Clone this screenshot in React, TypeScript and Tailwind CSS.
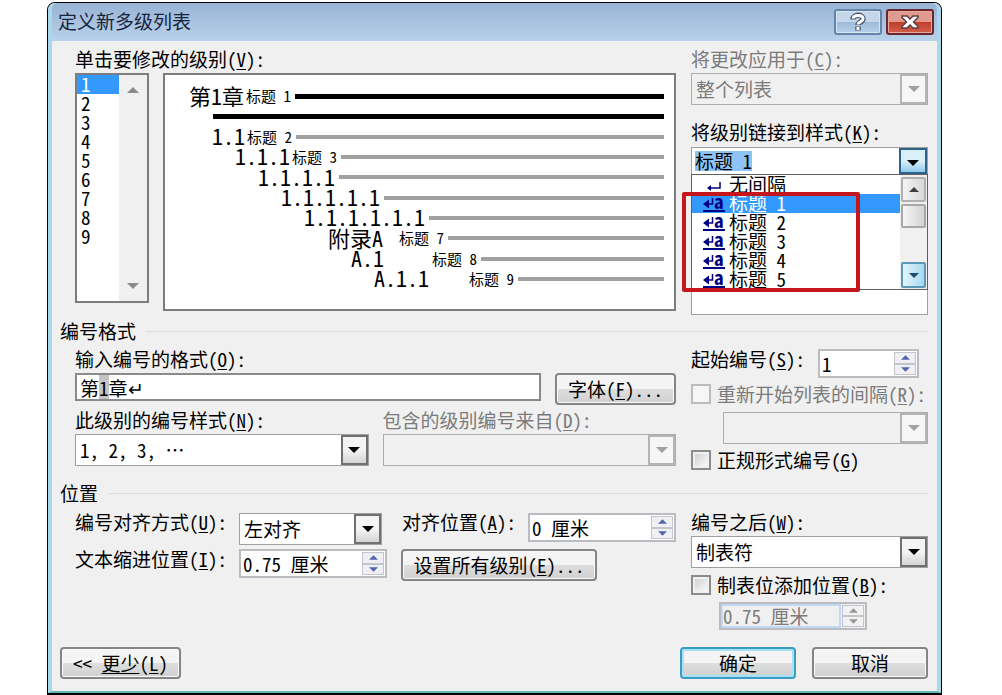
import { useId, type ReactNode } from "react";
import clsx from "clsx";

const previewRows = [
  { no: "第1章", title: "标题 1", indent: "ml-6", tab: "ml-[2px]", dark: true },
  { no: "", title: "", indent: "ml-12", tab: "", dark: true },
  { no: "1.1", title: "标题 2", indent: "ml-[47px]", tab: "ml-[2px]" },
  { no: "1.1.1", title: "标题 3", indent: "ml-[70px]", tab: "ml-[2px]" },
  { no: "1.1.1.1", title: "", indent: "ml-[93px]", tab: "" },
  { no: "1.1.1.1.1", title: "", indent: "ml-[116px]", tab: "" },
  { no: "1.1.1.1.1.1", title: "", indent: "ml-[139px]", tab: "" },
  { no: "附录A", title: "标题 7", indent: "ml-[163px]", tab: "ml-4" },
  { no: "A.1", title: "标题 8", indent: "ml-[186px]", tab: "ml-12" },
  { no: "A.1.1", title: "标题 9", indent: "ml-[209px]", tab: "ml-10" },
];

const levels = ["1", "2", "3", "4", "5", "6", "7", "8", "9"];
const styles = ["无间隔", "标题 1", "标题 2", "标题 3", "标题 4", "标题 5"];

function Text({ label, hot, end = ":" }: { label: string; hot: string; end?: string }) {
  return (
    <>
      {label}(<u className="underline-offset-2">{hot}</u>){end}
    </>
  );
}

function Arrow({ up = false, className }: { up?: boolean; className?: string }) {
  return (
    <svg viewBox="0 0 12 6" className={clsx("fill-current", className)} aria-hidden="true">
      <path d={up ? "M0 6 6 0l6 6z" : "M0 0h12L6 6z"} />
    </svg>
  );
}

function DropDown({ id, value, disabled = false }: { id: string; value: string; disabled?: boolean }) {
  return (
    <div className="relative h-8 w-full">
      <select
        id={id}
        disabled={disabled}
        className={clsx(
          "h-full w-full appearance-none border px-1 outline-none",
          disabled ? "border-[#adadad] bg-[#f0f0f0] text-[#7b7b7b] opacity-100" : "border-[#a0a0a0] bg-white text-black"
        )}
      >
        <option>{value}</option>
      </select>
      <span
        className={clsx(
          "pointer-events-none absolute inset-y-px right-px flex w-[27px] items-center justify-center border-2",
          disabled
            ? "border-[#b4b4b4] bg-[#f6f6f6] text-[#a0a0a0]"
            : "border-[#707070] bg-linear-to-b from-[#f4f4f4] from-50% to-[#d4d4d4] text-black"
        )}
      >
        <Arrow className="h-[6px] w-3" />
      </span>
    </div>
  );
}

function Spinner({ id, value, disabled = false }: { id: string; value: string; disabled?: boolean }) {
  const step = clsx(
    "flex flex-1 items-center justify-center border border-[#c4c4cc]",
    disabled ? "bg-[#f2f2f2] text-[#9a9a9a]" : "bg-[#f0f0f4] text-[#5266a8]"
  );
  return (
    <div
      className={clsx(
        "flex w-full border-2 border-[#b9bcc0]",
        disabled ? "h-7 bg-[#f0f0f0] text-[#7b7b7b]" : "h-[29px] bg-white text-black"
      )}
    >
      <input
        id={id}
        defaultValue={value}
        disabled={disabled}
        className={clsx("min-w-0 flex-1 outline-none", disabled ? "border-2 border-[#c3d9f3]" : "px-[2px]")}
      />
      <div className="flex w-6 flex-col p-px">
        <button type="button" aria-label="增加" disabled={disabled} className={step}>
          <Arrow up className="h-[5px] w-[9px]" />
        </button>
        <button type="button" aria-label="减少" disabled={disabled} className={step}>
          <Arrow className="h-[5px] w-[9px]" />
        </button>
      </div>
    </div>
  );
}

function PushButton({ children, className, primary = false }: { children: ReactNode; className?: string; primary?: boolean }) {
  return (
    <button
      type="button"
      className={clsx(
        "h-8 rounded-[4px] border-2 bg-linear-to-b from-[#f4f4f4] from-50% via-[#dedede] via-50% to-[#d0d0d0] leading-7",
        primary ? "border-[#3c9cc4] shadow-[inset_0_0_0_2px_#a6e2f6]" : "border-[#858585] shadow-[inset_0_0_0_1px_#fafafa]",
        className
      )}
    >
      {children}
    </button>
  );
}

function CheckBox({ children, disabled = false }: { children: ReactNode; disabled?: boolean }) {
  const id = useId();
  return (
    <div className="flex h-6 items-center gap-[6px]">
      <input
        id={id}
        type="checkbox"
        disabled={disabled}
        className={clsx(
          "size-5 shrink-0 appearance-none border-2",
          disabled
            ? "border-[#bcbcbc] bg-[#f6f6f6]"
            : "border-[#8c8c8c] bg-linear-to-br from-[#c8ccd0] to-white shadow-[inset_0_0_0_2px_#f0f0f0]"
        )}
      />
      <label htmlFor={id} className={clsx("whitespace-nowrap", disabled && "text-[#7b7b7b]")}>
        {children}
      </label>
    </div>
  );
}

function SectionTitle({ children }: { children: ReactNode }) {
  return (
    <div className="flex h-6 items-center gap-[10px]">
      <h2>{children}</h2>
      <div className="h-px flex-1 bg-[#d5dfe5]" />
    </div>
  );
}

function StyleIcon({ paragraph }: { paragraph: boolean }) {
  if (paragraph) {
    return (
      <svg viewBox="0 0 22 18" className="h-[18px] w-[22px] shrink-0" fill="none" stroke="#000080" aria-hidden="true">
        <path d="M17 6v6H6" strokeWidth="1.5" />
        <path d="M8 9v6l-4-3z" fill="#000080" stroke="none" />
      </svg>
    );
  }
  return (
    <span className="flex h-[17px] w-[22px] shrink-0 items-center border-b-2 border-[#000080] text-[#000080]">
      <svg viewBox="0 0 11 14" className="h-[14px] w-[11px]" fill="none" stroke="currentColor" aria-hidden="true">
        <path d="M9.500 2v6H4" strokeWidth="1.5" />
        <path d="M6 3.500v9L0 8z" fill="currentColor" stroke="none" />
      </svg>
      <b className="pb-[3px] font-['Noto_Sans_Mono_CJK_SC','Liberation_Mono',monospace] leading-4">a</b>
    </span>
  );
}

function TitleBar() {
  return (
    <header className="flex h-[38px] justify-between rounded-t-[5px] bg-linear-to-b from-[#98b4d4] to-[#b9d1ea] pr-[3px] pl-[6px]">
      <h1 className="leading-9 text-[#17233c]">定义新多级列表</h1>
      <div className="flex gap-1 pt-[6px]">
        <button
          type="button"
          aria-label="帮助"
          className="flex h-[26px] w-[48px] items-center justify-center rounded-[3px] border-2 border-[#6484a8] bg-linear-to-b from-[#c3d6ea] from-50% via-[#9dbbd9] via-50% to-[#b6d0e9] shadow-[inset_0_0_0_1px_#d7e5f3]"
        >
          <svg viewBox="0 0 16 20" className="h-5 w-4" fill="none" aria-hidden="true">
            <path d="M3 7.500C3 2 13 2 13 7c0 3-5 3-5 6M8 14.500v4" stroke="#4c566a" strokeWidth="5.500" />
            <path d="M3 6.500C4 2.500 13 2.500 13 7c0 3-5 3-5 5.500M8 15v3" stroke="#fff" strokeWidth="3" />
          </svg>
        </button>
        <button
          type="button"
          aria-label="关闭"
          className="flex h-[26px] w-[48px] items-center justify-center rounded-[3px] border-2 border-[#6b2630] bg-linear-to-b from-[#e09a90] from-50% via-[#c03c28] via-50% to-[#d0604a] shadow-[inset_0_0_0_1px_#eba99e]"
        >
          <svg viewBox="0 0 18 16" className="h-4 w-[18px]" aria-hidden="true">
            <path
              d="M1 2h5l3 3 3-3h5v1.500L12.500 8l4.500 4.500V14h-5l-3-3-3 3H1v-1.500L5.500 8 1 3.500z"
              fill="#fff"
              stroke="#5c4048"
              strokeWidth="1.500"
            />
          </svg>
        </button>
      </div>
    </header>
  );
}

function LevelList() {
  return (
    <div className="flex h-[230px] w-[74px] shrink-0 border-2 border-[#7d7d7d] bg-white">
      <ul role="listbox" aria-labelledby="level-label" className="flex-1">
        {levels.map((level) => (
          <li
            key={level}
            role="option"
            aria-selected={level === "1"}
            className={clsx("h-[19px] px-1 leading-[18px]", level === "1" && "bg-[#3399ff] text-white")}
          >
            {level}
          </li>
        ))}
      </ul>
      <div className="flex w-7 flex-col justify-between bg-[#f0f0f0] py-2 text-[#8a8a8a]">
        <button type="button" aria-label="向上滚动" className="flex justify-center py-1">
          <Arrow up className="h-[6px] w-3" />
        </button>
        <button type="button" aria-label="向下滚动" className="flex justify-center py-1">
          <Arrow className="h-[6px] w-3" />
        </button>
      </div>
    </div>
  );
}

function Preview() {
  return (
    <div className="h-[238px] flex-1 border-2 border-[#7d7d7d] bg-white pt-[11px] pr-[10px]">
      <div className="flex h-[203px] flex-col justify-between">
        {previewRows.map((row, i) => (
          <div key={i} className={clsx("flex h-5 items-center whitespace-pre", row.indent)}>
            {row.no && <span className="pb-[3px] text-[22px] leading-5">{row.no}</span>}
            {row.title && <span className={clsx("text-[15px] leading-4", row.tab)}>{row.title}</span>}
            <span className={clsx("flex-1", row.no && "ml-1", row.dark ? "h-[5px] bg-black" : "h-1 bg-[#a0a0a0]")} />
          </div>
        ))}
      </div>
    </div>
  );
}

function StyleCombo() {
  return (
    <div className="relative mt-[3px] h-[168px] border border-[#a0a0a0] bg-white">
      <div className="flex h-[26px] justify-between">
        <div className="flex flex-1 items-center pl-[3px]">
          <input id="link-style" defaultValue="标题 1" className="field-sizing-content h-5 bg-[#8ec3f5] outline-none" />
        </div>
        <button
          type="button"
          aria-label="展开样式列表"
          className="flex w-7 items-center justify-center border-2 border-[#2c628b] bg-linear-to-b from-[#d9effa] from-50% to-[#8fc9ea]"
        >
          <Arrow className="mt-1 h-[6px] w-3" />
        </button>
      </div>
      <div className="absolute inset-x-[-1px] top-[26px] flex border border-[#606060] bg-white">
        <ul role="listbox" aria-label="样式" className="flex-1">
          {styles.map((name, i) => (
            <li
              key={name}
              role="option"
              aria-selected={i === 1}
              className={clsx("flex h-[19px] items-center gap-1 pl-[11px] leading-[18px]", i === 1 && "bg-[#3399ff] text-white")}
            >
              <StyleIcon paragraph={i === 0} />
              <span className="pb-[2px]">{name}</span>
            </li>
          ))}
        </ul>
        <div className="flex w-[27px] flex-col bg-[#f0f0f0] px-px pt-[2px] pb-px">
          <button
            type="button"
            aria-label="向上滚动"
            className="flex h-[25px] items-center justify-center rounded-[2px] border-2 border-[#b0b0b0] bg-linear-to-r from-[#f4f4f4] to-[#d8d8d8] text-[#404040]"
          >
            <Arrow up className="h-[5px] w-[10px]" />
          </button>
          <div className="mt-[2px] h-6 rounded-[2px] border-2 border-[#a8a8a8] bg-linear-to-r from-[#f6f6f6] to-[#d4d4d4]" />
          <button
            type="button"
            aria-label="向下滚动"
            className="mt-auto flex h-[26px] items-center justify-center rounded-[2px] border-2 border-[#5d98b8] bg-linear-to-r from-[#e4f5fc] to-[#a5d8f0] text-[#1c4f6e]"
          >
            <Arrow className="h-[5px] w-[10px]" />
          </button>
        </div>
      </div>
      <div className="pointer-events-none absolute top-[44px] left-[-10px] h-[100px] w-[178px] rounded-[2px] border-4 border-[#c4161c]" />
    </div>
  );
}

export default function App() {
  return (
    <div className="min-h-screen bg-white pt-[2px] pr-[60px] pl-[47px] font-['Noto_Sans_Mono_CJK_SC','Noto_Sans_CJK_SC',sans-serif] text-[19px] leading-6 text-black">
      <main className="rounded-t-[8px] border border-b-2 border-black bg-[#f0f0f0]">
        <div className="rounded-t-[7px] border-x-4 border-b-2 border-[#a9d8ea] border-b-[#5fb5b8]">
          <TitleBar />

          <form className="pt-[6px] pr-[9px] pb-[12px] pl-[8px]">
            {/* Level, preview and linked style */}
            <section className="flex gap-[15px] pl-[15px]">
              <div className="min-w-0 flex-1">
                <div id="level-label">
                  <Text label="单击要修改的级别" hot="V" />
                </div>
                <div className="mt-[2px] flex gap-[14px]">
                  <LevelList />
                  <Preview />
                </div>
              </div>
              <div className="w-[237px] shrink-0">
                <label htmlFor="apply-to" className="block text-[#7b7b7b]">
                  <Text label="将更改应用于" hot="C" />
                </label>
                <div className="mt-[2px]">
                  <DropDown id="apply-to" value="整个列表" disabled />
                </div>
                <label htmlFor="link-style" className="mt-[15px] block">
                  <Text label="将级别链接到样式" hot="K" />
                </label>
                <StyleCombo />
              </div>
            </section>

            {/* Number format */}
            <section className="mt-1">
              <SectionTitle>编号格式</SectionTitle>
              <div className="mt-1 flex gap-[15px] pl-[15px]">
                <div className="min-w-0 flex-1">
                  <label htmlFor="format">
                    <Text label="输入编号的格式" hot="O" />
                  </label>
                  <div className="mt-[2px] flex gap-[14px]">
                    <div className="relative h-7 flex-1 border-2 border-[#8a8a8a] bg-white">
                      <span className="absolute top-0 left-[22px] h-6 w-[10px] bg-[#c4c4c4]" />
                      <input id="format" defaultValue="第1章↵" className="relative h-full w-full px-[3px] outline-none" />
                    </div>
                    <PushButton className="w-[121px]">
                      <Text label="字体" hot="F" end="..." />
                    </PushButton>
                  </div>
                  <div className="mt-[3px] grid grid-cols-2 gap-x-[14px] gap-y-[2px]">
                    <label htmlFor="number-style">
                      <Text label="此级别的编号样式" hot="N" />
                    </label>
                    <label htmlFor="include-from" className="text-[#7b7b7b]">
                      <Text label="包含的级别编号来自" hot="D" />
                    </label>
                    <DropDown id="number-style" value="1, 2, 3, …" />
                    <DropDown id="include-from" value="" disabled />
                  </div>
                </div>
                <div className="w-[237px] shrink-0">
                  <div className="flex justify-between pr-[9px]">
                    <label htmlFor="start-at">
                      <Text label="起始编号" hot="S" />
                    </label>
                    <div className="mt-[2px] w-[101px]">
                      <Spinner id="start-at" value="1" />
                    </div>
                  </div>
                  <div className="mt-1">
                    <CheckBox disabled>
                      <Text label="重新开始列表的间隔" hot="R" />
                    </CheckBox>
                  </div>
                  <div className="mt-[6px] pl-8">
                    <DropDown id="restart-after" value="" disabled />
                  </div>
                  <div className="mt-1">
                    <CheckBox>
                      <Text label="正规形式编号" hot="G" end="" />
                    </CheckBox>
                  </div>
                </div>
              </div>
            </section>

            {/* Position */}
            <section className="mt-[9px]">
              <SectionTitle>位置</SectionTitle>
              <div className="mt-[5px] flex gap-[15px] pl-[15px]">
                <div className="min-w-0 flex-1">
                  <div className="flex">
                    <label htmlFor="alignment" className="w-[164px] shrink-0 whitespace-nowrap">
                      <Text label="编号对齐方式" hot="U" />
                    </label>
                    <div className="mt-[3px] w-[143px] shrink-0">
                      <DropDown id="alignment" value="左对齐" />
                    </div>
                    <label htmlFor="aligned-at" className="ml-5 flex-1 whitespace-nowrap">
                      <Text label="对齐位置" hot="A" />
                    </label>
                    <div className="mt-[3px] w-[148px] shrink-0">
                      <Spinner id="aligned-at" value="0 厘米" />
                    </div>
                  </div>
                  <div className="mt-[2px] flex">
                    <label htmlFor="indent-at" className="w-[164px] shrink-0 whitespace-nowrap">
                      <Text label="文本缩进位置" hot="I" />
                    </label>
                    <div className="mt-[2px] w-[148px] shrink-0">
                      <Spinner id="indent-at" value="0.75 厘米" />
                    </div>
                    <PushButton className="mt-[2px] ml-[14px] w-[196px] whitespace-nowrap">
                      <Text label="设置所有级别" hot="E" end="..." />
                    </PushButton>
                  </div>
                </div>
                <div className="w-[237px] shrink-0">
                  <label htmlFor="follow-with" className="block">
                    <Text label="编号之后" hot="W" />
                  </label>
                  <div className="mt-[2px]">
                    <DropDown id="follow-with" value="制表符" />
                  </div>
                  <div className="mt-[5px]">
                    <CheckBox>
                      <Text label="制表位添加位置" hot="B" />
                    </CheckBox>
                  </div>
                  <div className="mt-[5px] ml-7 w-[148px]">
                    <Spinner id="tab-stop" value="0.75 厘米" disabled />
                  </div>
                </div>
              </div>
            </section>

            <footer className="mt-[17px] flex gap-4">
              <PushButton className="mr-auto w-[121px]">
                {"<< "}
                <u className="underline-offset-2">更少</u>
                <Text label="" hot="L" end="" />
              </PushButton>
              <PushButton primary className="w-[116px]">
                确定
              </PushButton>
              <PushButton className="w-[116px]">取消</PushButton>
            </footer>
          </form>
        </div>
      </main>
    </div>
  );
}
